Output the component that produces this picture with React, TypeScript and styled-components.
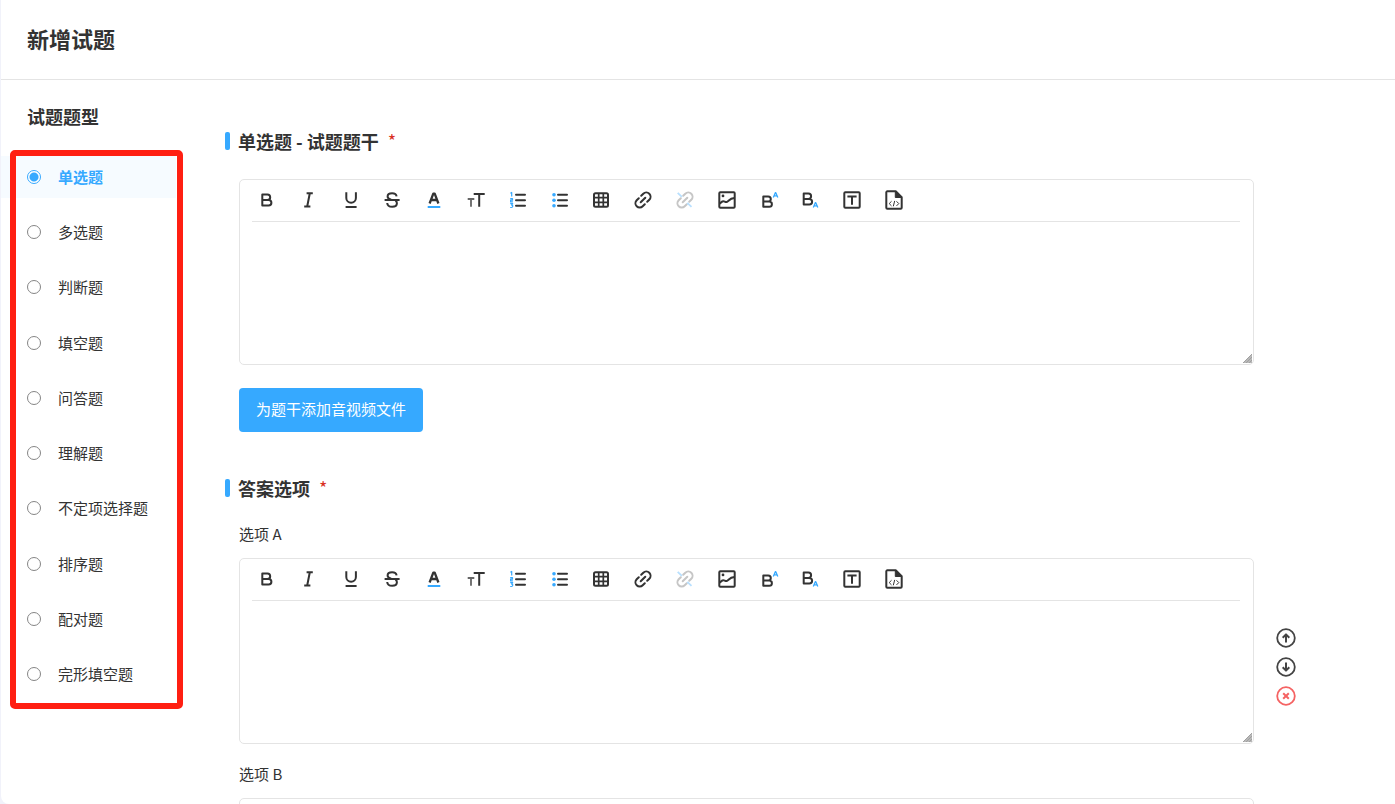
import React, { useState } from "react";
import styled, { createGlobalStyle } from "styled-components";

const INK = "#333";
const BLUE = "#36a9ff";
const LINE = "#e4e4e4";

const GlobalStyle = createGlobalStyle`
  *, *::before, *::after { box-sizing: border-box; }
  body {
    margin: 0;
    background: #f1f2fa;
    color: ${INK};
    font-family: "Noto Sans CJK SC", "Noto Sans", sans-serif;
    font-size: 15px;
    line-height: 24px;
  }
  button, textarea, input { font: inherit; color: inherit; }
`;

const Page = styled.div`
  display: flex;
  flex-direction: column;
  height: 100vh;
  margin-left: 1px;
  background: #fff;
  border-bottom-left-radius: 8px;
  overflow: hidden;
`;

const Header = styled.header`
  display: flex;
  flex: none;
  align-items: center;
  height: 80px;
  padding: 0 26px 4px;
  border-bottom: 1px solid ${LINE};
`;

const PageTitle = styled.h1`
  margin: 0;
  font-size: 22px;
  line-height: 32px;
  font-weight: 700;
`;

const Body = styled.div`
  display: flex;
  flex: 1;
  min-height: 0;
`;

const Sidebar = styled.aside`
  flex: none;
  width: 175px;
  padding-top: 24px;
`;

const SidebarTitle = styled.h2`
  margin: 0 0 28px;
  padding-left: 26px;
  font-size: 18px;
  line-height: 24px;
  font-weight: 700;
`;

const TypeList = styled.div`
  position: relative;
  display: flex;
  flex-direction: column;
  justify-content: space-between;
  min-height: 539px;
`;

const Frame = styled.div`
  position: absolute;
  inset: -6px -7px -14px 9px;
  border: 6px solid #ff1f12;
  border-radius: 5px;
  pointer-events: none;
`;

const TypeRow = styled.label<{ $active: boolean }>`
  display: flex;
  align-items: center;
  gap: 17px;
  height: 42px;
  padding-left: 26px;
  cursor: pointer;
  background: ${(p) => (p.$active ? "#f6fbff" : "transparent")};
  color: ${(p) => (p.$active ? BLUE : INK)};
  font-weight: ${(p) => (p.$active ? 700 : 400)};
`;

const Radio = styled.input`
  appearance: none;
  flex: none;
  width: 14px;
  height: 14px;
  margin: 0;
  border: 1px solid #858585;
  border-radius: 50%;
  background: #fff;
  &:checked {
    border-color: ${BLUE};
    background: radial-gradient(circle, ${BLUE} 4px, #fff 5px);
  }
`;

const Main = styled.main`
  flex: 1;
  min-width: 0;
  padding: 49px 141px 40px 49px;
  overflow-y: auto;
  scrollbar-width: none;
`;

const Section = styled.section`
  display: flex;
  flex-direction: column;
  align-items: stretch;
  margin-bottom: 44px;
`;

const SectionTitle = styled.h2`
  display: flex;
  align-items: center;
  margin: 0;
  font-size: 18px;
  line-height: 24px;
  font-weight: 700;
  &::before {
    content: "";
    width: 5px;
    height: 18px;
    margin-right: 8px;
    border-radius: 2px;
    background: ${BLUE};
  }
`;

const Required = styled.span`
  margin-left: 9px;
  padding-bottom: 2px;
  color: #d9301f;
  font-size: 18px;
  line-height: 22px;
  font-weight: 400;
`;

const Content = styled.div`
  display: flex;
  flex-direction: column;
  align-items: stretch;
  gap: 23px;
  margin-left: 14px;
`;

const StemContent = styled(Content)`
  padding-top: 26px;
`;

const OptionsContent = styled(Content)`
  padding-top: 22px;
`;

const EditorBox = styled.div`
  position: relative;
  display: flex;
  flex-direction: column;
  height: 186px;
  padding: 0 13px 0 12px;
  border: 1px solid ${LINE};
  border-radius: 5px;
`;

const Toolbar = styled.div`
  flex: none;
  height: 42px;
  padding-left: 5px;
  border-bottom: 1px solid ${LINE};
`;

const ToolGroup = styled.div`
  display: flex;
  align-items: center;
  justify-content: space-between;
  max-width: 647px;
  height: 40px;
`;

const IconButton = styled.button`
  display: block;
  width: 20px;
  height: 20px;
  padding: 0;
  border: 0;
  background: none;
  cursor: pointer;
  svg { display: block; }
`;

const TextArea = styled.textarea`
  flex: 1;
  width: 100%;
  padding: 10px 4px;
  border: 0;
  outline: 0;
  resize: none;
  background: transparent;
`;

const Grip = styled.svg`
  position: absolute;
  right: 1px;
  bottom: 1px;
  cursor: ns-resize;
`;

const UploadButton = styled.button`
  align-self: flex-start;
  height: 44px;
  padding: 0 17px 2px;
  border: 0;
  border-radius: 4px;
  background: ${BLUE};
  color: #fff;
  cursor: pointer;
`;

const Option = styled.div`
  position: relative;
  display: flex;
  flex-direction: column;
  gap: 12px;
  margin-bottom: -5px;
`;

const OptionActions = styled.div`
  position: absolute;
  left: calc(100% + 22px);
  top: 106px;
  display: flex;
  flex-direction: column;
  gap: 9px;
`;

type IconProps = { children: React.ReactNode; color?: string };

function Icon({ children, color = INK }: IconProps) {
  return (
    <svg width="20" height="20" viewBox="0 0 20 20" fill="none" stroke={color} strokeWidth="2" strokeLinejoin="round" aria-hidden="true">
      {children}
    </svg>
  );
}

const LETTER_B = "M5.3 4.4h5.1a2.8 2.8 0 0 1 0 5.6H5.3zM5.3 10h6.3a2.8 2.8 0 0 1 0 5.6H5.3z";
const LINK_UPPER = "M8.2 5.8l2.1-2.1a4.2 4.2 0 0 1 6 6l-2.100 2.100";
const LINK_LOWER = "M11.8 14.200l-2.100 2.100a4.200 4.200 0 0 1-6-6l2.100-2.100";
const LINK_BAR = "M7.700 12.300l4.600-4.600";

const ROWS = <path d="M8 4.7h9M8 10.2h9M8 15.7h9" strokeLinecap="round" />;

const tools: { name: string; icon: React.ReactNode }[] = [
  { name: "粗体", icon: <Icon><path d={LETTER_B} /></Icon> },
  { name: "斜体", icon: <Icon><path d="M7.6 3.2h6.2M5.2 16.5h6.2M10.8 3.2L8.2 16.5" /></Icon> },
  { name: "下划线", icon: <Icon><path d="M5.3 2.3v5.6a4.8 4.8 0 0 0 9.6 0V2.3M4.6 17h11" /></Icon> },
  {
    name: "删除线",
    icon: (
      <Icon>
        <path d="M14.6 6.3c-.3-2-2-3.1-4.5-3.1-2.700 0-4.500 1.200-4.500 3.200 0 1.800 1.400 2.700 3.600 3.300M5.200 13c.2 2.400 2.200 3.800 5 3.800 2.900 0 4.700-1.300 4.700-3.500 0-1.200-.5-2.200-1.400-2.900" />
        <path d="M2.600 10h15" />
      </Icon>
    ),
  },
  {
    name: "文字颜色",
    icon: (
      <Icon>
        <path d="M5.600 13.500L9.300 3.600h1.400L14.400 13.500M7.200 10h5.600" strokeWidth="2.300" />
        <path d="M3.700 17h12.600" stroke={BLUE} />
      </Icon>
    ),
  },
  {
    name: "字号",
    icon: (
      <Icon>
        <path d="M1.700 9h6.600M5 9v7.700" stroke="#666" strokeWidth="1.800" />
        <path d="M7.700 4h11M13.200 4v12.700" />
      </Icon>
    ),
  },
  {
    name: "有序列表",
    icon: (
      <Icon>
        {ROWS}
        <path d="M2.400 3.200l1.300-.7v4M2.200 8.600h2.300v1.600H2.600v1.700h2.300M2.200 13.600h2.500l-1.100 1.500c1.700 0 1.500 2.400-.2 2.400H2.200" stroke={BLUE} strokeWidth="1.200" />
      </Icon>
    ),
  },
  {
    name: "无序列表",
    icon: (
      <Icon>
        {ROWS}
        <g fill={BLUE} stroke="none">
          <circle cx="4" cy="4.700" r="1.800" />
          <circle cx="4" cy="10.200" r="1.800" />
          <circle cx="4" cy="15.700" r="1.800" />
        </g>
      </Icon>
    ),
  },
  {
    name: "表格",
    icon: (
      <Icon>
        <rect x="3" y="3.200" width="14" height="13.600" rx="1.500" />
        <path d="M7.700 3v14M12.300 3v14M3 7.700h14M3 12.300h14" strokeWidth="1.700" />
      </Icon>
    ),
  },
  {
    name: "插入链接",
    icon: (
      <Icon>
        <path d={LINK_UPPER} strokeLinecap="round" />
        <path d={LINK_LOWER} strokeLinecap="round" />
        <path d={LINK_BAR} strokeLinecap="round" />
      </Icon>
    ),
  },
  {
    name: "取消链接",
    icon: (
      <Icon color="#c6c6c6">
        <path d={LINK_UPPER} strokeLinecap="round" />
        <path d={LINK_LOWER} strokeLinecap="round" />
        <path d={LINK_BAR} strokeLinecap="round" />
        <path d="M2.700 2.900l4.200 4M12.300 12.800l4.200 4.100" stroke="#b8e0ff" strokeWidth="1.800" />
      </Icon>
    ),
  },
  {
    name: "插入图片",
    icon: (
      <Icon>
        <rect x="2.300" y="2.200" width="15.400" height="15.600" rx="1" />
        <path d="M2.500 13.600l3-2.200c1.800-.8 2.700 1.300 4.500.5 1.800-.9 2.600-3.600 7.500-3.900" />
        <circle cx="6" cy="5.900" r="1.400" fill={INK} stroke="none" />
      </Icon>
    ),
  },
  {
    name: "上标",
    icon: (
      <Icon>
        <path d="M4.300 6.400h4.900a2.600 2.600 0 0 1 0 5.200H4.300zM4.300 11.600h6a2.600 2.600 0 0 1 0 5.200h-6z" />
        <path d="M14.300 7.400l2-4.700h.5l2 4.700M15 5.900h3" stroke={BLUE} strokeWidth="1.300" />
      </Icon>
    ),
  },
  {
    name: "下标",
    icon: (
      <Icon>
        <path d="M3.700 3.600h4.700a2.600 2.600 0 0 1 0 5.400H3.700zM3.700 9h5.600a2.600 2.600 0 0 1 0 5.600H3.700z" />
        <path d="M13.300 17.400l2-4.700h.5l2 4.700M14 15.900h3" stroke={BLUE} strokeWidth="1.300" />
      </Icon>
    ),
  },
  {
    name: "文本框",
    icon: (
      <Icon>
        <rect x="2.300" y="2.300" width="15.400" height="15.400" rx="1" />
        <path d="M5.400 6.500h9.200M10 6.500v8.200" />
      </Icon>
    ),
  },
  {
    name: "源代码",
    icon: (
      <Icon>
        <path d="M2.300 2.300a1 1 0 0 1 1-1h8.400l6 6v10.400a1 1 0 0 1-1 1H3.300a1 1 0 0 1-1-1z" />
        <path d="M11.300 1.500v6h6z" fill={INK} strokeWidth="1" />
        <path d="M7.500 11.300l-2.300 2.300 2.300 2.300M12.500 11.300l2.300 2.300-2.300 2.300M10.700 10.900l-1.400 5.400" strokeWidth="1" />
      </Icon>
    ),
  },
];

const optionActions = [
  { name: "上移", color: "#444", path: "M10 14.500V7M6.700 9.700L10 6.400l3.300 3.300" },
  { name: "下移", color: "#444", path: "M10 5.500V13M6.700 10.300l3.300 3.300 3.300-3.300" },
  { name: "删除", color: "#f56363", path: "M7.200 7.200l5.600 5.600M12.800 7.200l-5.600 5.600" },
];

const questionTypes = ["单选题", "多选题", "判断题", "填空题", "问答题", "理解题", "不定项选择题", "排序题", "配对题", "完形填空题"];

function Editor({ id, label }: { id: string; label: string }) {
  return (
    <EditorBox>
      <Toolbar role="toolbar" aria-label={label}>
        <ToolGroup>
          {tools.map((tool) => (
            <IconButton key={tool.name} type="button" aria-label={tool.name}>
              {tool.icon}
            </IconButton>
          ))}
        </ToolGroup>
      </Toolbar>
      <TextArea id={id} aria-label={label} />
      <Grip width="9" height="9" viewBox="0 0 9 9" aria-hidden="true">
        <path d="M0 9L9 0v9z" fill="#b8b8b8" />
        <path d="M0 9L9 0M3 9l6-6M6 9l3-3" stroke="#a0a0a0" strokeWidth="1" />
      </Grip>
    </EditorBox>
  );
}

function AnswerOption({ letter }: { letter: string }) {
  const id = `option-${letter}`;
  return (
    <Option>
      <label htmlFor={id}>选项 {letter}</label>
      <Editor id={id} label={`选项 ${letter}`} />
      <OptionActions>
        {optionActions.map((action) => (
          <IconButton key={action.name} type="button" aria-label={action.name}>
            <Icon color={action.color}>
              <circle cx="10" cy="10" r="8.800" strokeWidth="1.800" />
              <path d={action.path} />
            </Icon>
          </IconButton>
        ))}
      </OptionActions>
    </Option>
  );
}

export default function App() {
  const [selected, setSelected] = useState(questionTypes[0]);

  return (
    <>
      <GlobalStyle />
      <Page>
        <Header>
          <PageTitle>新增试题</PageTitle>
        </Header>
        <Body>
          <Sidebar>
            <SidebarTitle>试题题型</SidebarTitle>
            <TypeList role="radiogroup" aria-label="试题题型">
              {questionTypes.map((type) => (
                <TypeRow key={type} $active={type === selected}>
                  <Radio type="radio" name="question-type" checked={type === selected} onChange={() => setSelected(type)} />
                  {type}
                </TypeRow>
              ))}
              <Frame />
            </TypeList>
          </Sidebar>
          <Main>
            <Section>
              <SectionTitle>
                {selected} - 试题题干<Required>*</Required>
              </SectionTitle>
              <StemContent>
                <Editor id="stem" label="试题题干" />
                <UploadButton type="button">为题干添加音视频文件</UploadButton>
              </StemContent>
            </Section>
            <Section>
              <SectionTitle>
                答案选项<Required>*</Required>
              </SectionTitle>
              <OptionsContent>
                <AnswerOption letter="A" />
                <AnswerOption letter="B" />
              </OptionsContent>
            </Section>
          </Main>
        </Body>
      </Page>
    </>
  );
}
